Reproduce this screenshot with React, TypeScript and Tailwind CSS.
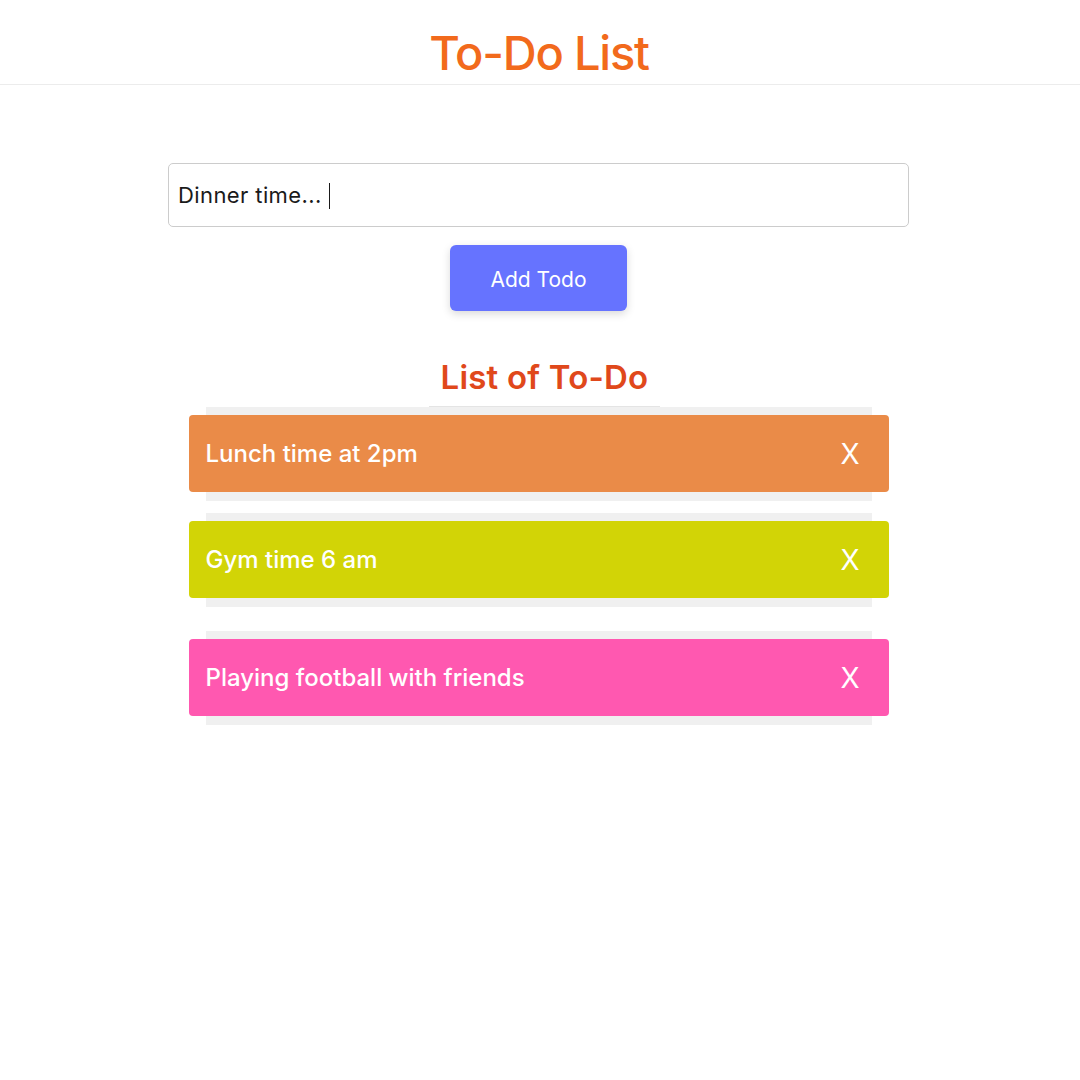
import React, { useState } from 'react';

const todos = [
  { id: 1, text: 'Lunch time at 2pm', color: 'bg-[#ea8b48]', gap: 'mt-0' },
  { id: 2, text: 'Gym time 6 am', color: 'bg-[#d2d406]', gap: 'mt-[12px]' },
  { id: 3, text: 'Playing football with friends', color: 'bg-[#ff58b0]', gap: 'mt-[24px]' },
];

export default function App() {
  const [value, setValue] = useState('Dinner time... ');

  return (
    <div className="min-h-screen bg-white font-['Inter',sans-serif]">
      {/* Header */}
      <header className="h-[85px] border-b border-[#ececec] flex justify-center pt-[29px] pr-[2px]">
        <h1 className="text-[47px] leading-[48px] font-medium text-[#f26a1c] tracking-[-1.2px]">To-Do List</h1>
      </header>

      <main className="w-[741px] ml-[168px] pt-[78px] flex flex-col items-center">
        <div className="relative w-full h-[64px] border border-[#cccccc] rounded-[5px] flex items-center px-[9px]">
          <input
            value={value}
            onChange={(e) => setValue(e.target.value)}
            className="w-full outline-none text-[22px] tracking-[0.4px] text-[#1a1a1a] bg-transparent caret-black"
          />
          {/* blinking caret as captured */}
          <span className="absolute left-[160px] top-[19px] h-[26px] w-px bg-[#1a1a1a]" />
        </div>

        <button className="mt-[18px] w-[177px] h-[66px] rounded-[6px] bg-[#6673ff] text-white text-[21px] pt-[3px] shadow-[0_3px_8px_rgba(0,0,0,0.15)]">
          Add Todo
        </button>

        <h2 className="mt-[46px] ml-[12px] px-[12px] pb-[9px] border-b border-[#e4e4e4] text-[33px] leading-[40px] font-semibold text-[#e0481b] tracking-[0.2px]">
          List of To-Do
        </h2>

        <ul className="w-[666px]">
          {todos.map((t) => (
            <li key={t.id} className={`${t.gap} bg-[#f0f0f0] pt-[8px] pb-[9px]`}>
              <div className={`-mx-[17px] h-[77px] rounded-[4px] ${t.color} flex items-center justify-between pl-[17px] pr-[29px]`}>
                <span className="text-white text-[24px] font-medium">{t.text}</span>
                <button className="text-white text-[28px] leading-none">X</button>
              </div>
            </li>
          ))}
        </ul>
      </main>
    </div>
  );
}
